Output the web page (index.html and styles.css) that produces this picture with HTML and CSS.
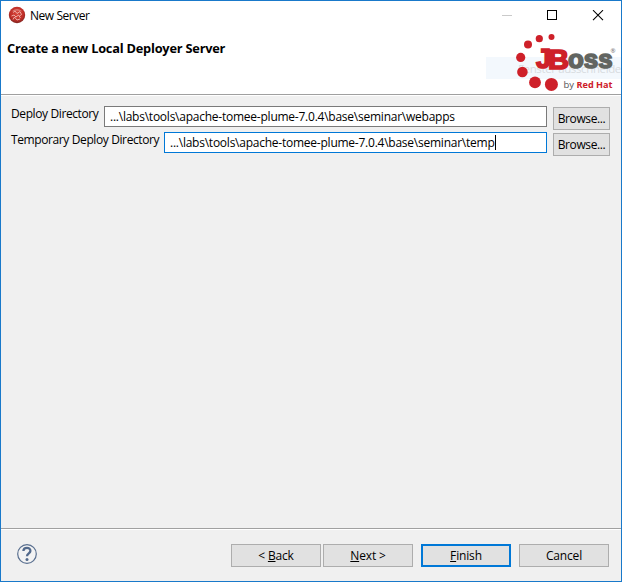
FILE: index.html
```html
<!DOCTYPE html>
<html lang="en">
<head>
<meta charset="utf-8">
<title>New Server</title>
<link rel="stylesheet" href="styles.css">
</head>
<body>
<main class="window">
  <header class="header">
    <div class="titlebar">
      <svg class="app-icon" width="18" height="18" viewBox="0 0 18 18">
        <defs>
          <radialGradient id="ball" cx=".5" cy=".4" r=".6">
            <stop offset="0" stop-color="#d9473b"/><stop offset=".7" stop-color="#bd2e28"/><stop offset="1" stop-color="#7d2420"/>
          </radialGradient>
        </defs>
        <circle cx="9" cy="9" r="8.200" fill="url(#ball)"/>
        <path d="M3.500 5.500Q9 .8 14.500 5.500Q9 3.400 3.500 5.500Z" fill="#e9aaa3" opacity=".7"/>
        <path d="M5 6.500l2-1.500 2 2.500 3-2 1.500 3-2 1.500M3.500 10l2.500-1 2 2 2.500-2 2 3M5 13.500l1.500-2.500 2.500 3 3-1" fill="none" stroke="#f2b9b2" stroke-width=".9"/>
      </svg>
      <span class="title">New Server</span>
      <svg class="controls" width="102" height="12" viewBox="0 0 102 12">
        <path d="M0 5.500H10" stroke="#cacaca"/>
        <rect x="45.500" y=".5" width="9" height="9" fill="none" stroke="#000"/>
        <path d="M91 .2L101 10.200M101 .2L91 10.200" stroke="#000" stroke-width="1.100"/>
      </svg>
    </div>
    <h1 class="heading">Create a new Local Deployer Server</h1>
    <svg class="logo" width="135" height="64" viewBox="486 30 135 64">
      <rect x="486" y="57" width="136" height="22" fill="#f3f8fd"/>
      <text class="ghost" x="518" y="72.500" textLength="110">Fenster ausschneiden</text>
      <g fill="#ce2029">
        <circle cx="551.500" cy="37" r="3"/>
        <circle cx="539.300" cy="38.700" r="3.600"/>
        <circle cx="528" cy="44.400" r="4"/>
        <circle cx="520.700" cy="57.400" r="4.600"/>
        <circle cx="522.400" cy="72" r="5.300"/>
        <circle cx="535" cy="82.400" r="5.900"/>
        <circle cx="551.400" cy="84.400" r="6.500"/>
      </g>
      <text class="logo-mark gray" x="568" y="68.300" font-size="26.500" textLength="44.500" lengthAdjust="spacingAndGlyphs">oss</text>
      <text class="logo-mark red" x="536" y="68.300" font-size="28.500" textLength="15" lengthAdjust="spacingAndGlyphs">J</text>
      <text class="logo-mark red" x="548" y="68.500" font-size="28.500" textLength="21" lengthAdjust="spacingAndGlyphs">B</text>
      <text class="logo-reg" x="610.500" y="53">®</text>
      <text class="logo-by" x="563.500" y="88" textLength="10.500" lengthAdjust="spacingAndGlyphs">by</text>
      <text class="logo-rh" x="576.500" y="88" textLength="36" lengthAdjust="spacingAndGlyphs">Red Hat</text>
    </svg>
  </header>
  <section class="form">
    <div class="row">
      <label class="label deploy">Deploy Directory</label>
      <div class="field"><span>...\labs\tools\apache-tomee-plume-7.0.4\base\seminar\webapps</span></div>
      <button class="btn browse"><span>Browse...</span></button>
    </div>
    <div class="row">
      <label class="label temporary">Temporary Deploy Directory</label>
      <div class="field focused"><span>...\labs\tools\apache-tomee-plume-7.0.4\base\seminar\temp</span><i class="caret"></i></div>
      <button class="btn browse"><span>Browse...</span></button>
    </div>
  </section>
  <footer class="footer">
    <svg class="help" width="20" height="20" viewBox="0 0 20 20">
      <circle cx="10" cy="10" r="9.300" fill="#f3f3f3" stroke="#596f8f" stroke-width="1.200"/>
      <path d="M6.400 7C6.500 2.800 13.600 2.900 13.400 6.900C13.300 9.400 10 9.300 10 12.300" fill="none" stroke="#536a8c" stroke-width="2.300"/>
      <circle cx="10" cy="15.400" r="1.500" fill="#536a8c"/>
    </svg>
    <button class="btn wide"><span>&lt; <u>B</u>ack</span></button>
    <button class="btn wide next"><span><u>N</u>ext &gt;</span></button>
    <button class="btn wide primary"><span><u>F</u>inish</span></button>
    <button class="btn wide"><span>Cancel</span></button>
  </footer>
</main>
</body>
</html>
```
FILE: styles.css
```css
* { box-sizing: border-box; }
body { margin: 0; font: 12px/16px "Open Sans", "Noto Sans", sans-serif; color: #000; }
.window { width: 622px; height: 582px; border: 1px solid #1979ca; background: #f0f0f0; display: flex; flex-direction: column; }
.header { position: relative; height: 94px; flex: none; background: #fff; border-bottom: 1px solid #a0a0a0; box-shadow: 0 1px #fff; }
.titlebar { display: flex; align-items: flex-start; padding: 5px 17px 0 7px; height: 30px; }
.title { margin: 2px 0 0 4px; letter-spacing: -.45px; }
.controls { margin: 4px 0 0 auto; }
.heading { margin: 9px 0 0 6px; font-size: 12.8px; line-height: 16px; font-weight: 700; letter-spacing: -.22px; }
.logo { position: absolute; right: 0; top: 29px; }
.logo-mark { font-family: "Liberation Sans", sans-serif; font-weight: 700; stroke-width: 1.7px; }
.red { fill: #ce2029; stroke: #ce2029; }
.gray { fill: #626561; stroke: #626561; }
.logo-reg { font-size: 6px; fill: #666; }
.logo-by { font-size: 9.5px; fill: #555; }
.logo-rh { font-size: 9.5px; font-weight: 700; fill: #ce2029; }
.ghost { font-size: 11.5px; fill: #777; opacity: .22; }
.form { flex: 1; padding: 11px 11px 0 10px; }
.row { display: flex; height: 26px; align-items: flex-start; }
.label { flex: none; white-space: nowrap; letter-spacing: -.39px; }
.deploy { width: 93px; }
.temporary { width: 153px; }
.field { flex: 1; height: 21px; border: 1px solid #7a7a7a; background: #fff; padding: 2px 0 0 5px; display: flex; white-space: nowrap; letter-spacing: -.24px; }
.focused { border-color: #0078d7; }
.caret { width: 1px; height: 15px; background: #000; }
.btn { height: 23px; padding: 0; border: 1px solid #adadad; border-radius: 0; background: #e1e1e1; font: inherit; color: #000; text-align: center; letter-spacing: -.15px; }
.browse { width: 57px; margin: 1px 0 0 6px; letter-spacing: -.4px; }
.footer { height: 53px; flex: none; border-top: 1px solid #a0a0a0; box-shadow: inset 0 1px #fff; display: flex; align-items: flex-start; padding: 15px 12px 0 16px; }
.help { margin-right: auto; }
.wide { width: 90px; }
.next { margin: 0 8px 0 2px; }
.primary { border: 2px solid #0078d7; margin-right: 8px; }
u { text-underline-offset: 1px; text-decoration-thickness: 1px; }
```
